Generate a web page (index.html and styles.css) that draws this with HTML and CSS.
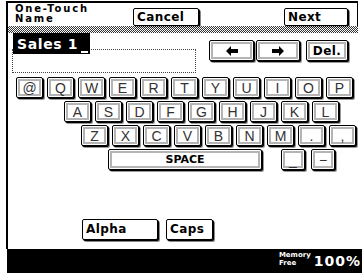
FILE: index.html
```html
<!DOCTYPE html>
<html>
<head>
<meta charset="utf-8">
<title>One-Touch Name</title>
<link rel="stylesheet" href="styles.css">
</head>
<body>
<div class="screen">
  <div class="frame">
    <header class="top">
      <div class="title"><div class="tline">One-Touch</div><div class="tline">Name</div></div>
      <div class="btn cancel">Cancel</div>
      <div class="btn next">Next</div>
    </header>
    <div class="band"></div>
    <div class="entry-row">
      <div class="entry">
        <div class="value">Sales 1<span class="cursor"></span></div>
        <div class="field"></div>
      </div>
      <div class="nav">
        <div class="key navkey left"><svg width="12" height="10" viewBox="0 0 12 10"><polygon points="0,5 5,0 5,3 12,3 12,7 5,7 5,10" fill="#000"/></svg></div>
        <div class="key navkey right"><svg width="12" height="10" viewBox="0 0 12 10"><polygon points="12,5 7,0 7,3 0,3 0,7 7,7 7,10" fill="#000"/></svg></div>
        <div class="key navkey del">Del.</div>
      </div>
    </div>
    <div class="keyboard">
      <div class="krow r1">
        <div class="key">@</div><div class="key">Q</div><div class="key">W</div><div class="key">E</div><div class="key">R</div><div class="key">T</div><div class="key">Y</div><div class="key">U</div><div class="key">I</div><div class="key">O</div><div class="key">P</div>
      </div>
      <div class="krow r2">
        <div class="key">A</div><div class="key">S</div><div class="key">D</div><div class="key">F</div><div class="key">G</div><div class="key">H</div><div class="key">J</div><div class="key">K</div><div class="key">L</div>
      </div>
      <div class="krow r3">
        <div class="key">Z</div><div class="key">X</div><div class="key">C</div><div class="key">V</div><div class="key">B</div><div class="key">N</div><div class="key">M</div><div class="key">.</div><div class="key">,</div>
      </div>
      <div class="krow r4">
        <div class="key space">SPACE</div>
        <div class="key small under">_</div>
        <div class="key small dash">&minus;</div>
      </div>
    </div>
    <div class="modes">
      <div class="btn alpha">Alpha</div>
      <div class="btn caps">Caps</div>
    </div>
  </div>
  <footer class="status">
    <div class="mem"><div class="mline">Memory</div><div class="mline">Free</div></div>
    <div class="pct">100%</div>
  </footer>
</div>
</body>
</html>
```
FILE: styles.css
```css
html, body {
  margin: 0;
  padding: 0;
  background: #fff;
}
body {
  width: 362px;
  height: 273px;
  overflow: hidden;
  font-family: "DejaVu Sans", "Liberation Sans", sans-serif;
  color: #000;
}
.screen {
  width: 362px;
  height: 273px;
  display: flex;
  flex-direction: column;
}
.frame {
  margin: 1px 4px 0 6px;
  height: 248px;
  box-sizing: border-box;
  border-left: 2px solid #000;
  border-top: 2px solid #000;
  display: flex;
  flex-direction: column;
}
.top {
  height: 23px;
  display: flex;
  align-items: flex-start;
  padding-left: 7px;
  border-right: 1px solid #000;
}
.title {
  width: 118px;
  flex: 0 0 118px;
  font-weight: bold;
  font-size: 10px;
  letter-spacing: 1.8px;
  padding-top: 1px;
}
.tline {
  height: 10px;
  line-height: 10px;
}
.btn {
  box-sizing: border-box;
  height: 18px;
  border: 1px solid #000;
  border-radius: 2px;
  background: #fff;
  box-shadow: 1px 1px 0 #000, 2px 2px 0 #8a8a8a;
  font-weight: bold;
  font-size: 12px;
  line-height: 16px;
  padding-left: 3px;
  letter-spacing: 0.4px;
}
.cancel {
  width: 66px;
  margin-top: 5px;
}
.next {
  width: 64px;
  margin-top: 5px;
  margin-left: 85px;
}
.band {
  height: 7px;
  background: repeating-conic-gradient(#000 0 25%, #fff 0 50%) 0 0 / 2px 2px;
  opacity: 0.8;
}
.entry-row {
  height: 40px;
  display: flex;
  align-items: flex-start;
  padding-left: 4px;
}
.entry {
  width: 184px;
  display: flex;
  flex-direction: column;
}
.value {
  position: relative;
  z-index: 1;
  box-sizing: border-box;
  margin-left: 1px;
  width: 77px;
  height: 21px;
  background: #000;
  color: #fff;
  font-weight: bold;
  font-size: 14px;
  letter-spacing: 0.6px;
  padding-left: 4px;
  display: flex;
  align-items: center;
}
.cursor {
  align-self: flex-end;
  width: 7px;
  height: 2px;
  margin-left: 3px;
  margin-bottom: 1px;
  background: #fff;
}
.field {
  box-sizing: border-box;
  height: 24px;
  margin-top: -5px;
  border: 1px dotted #444;
}
.nav {
  display: flex;
  margin-left: 13px;
  margin-top: 7px;
}
.key {
  box-sizing: border-box;
  width: 27px;
  height: 21px;
  flex: 0 0 auto;
  border: 1px solid #000;
  border-radius: 2px;
  background: #fff;
  box-shadow: inset 0 0 0 1px #fff, inset 0 0 0 3px #b4b4b4, inset 0 0 0 4px #fff, 1px 1px 0 #000, 2px 2px 0 #9a9a9a;
  display: flex;
  align-items: center;
  justify-content: center;
  font-family: "Liberation Sans", sans-serif;
  font-size: 14px;
  color: #333;
}
.navkey.left {
  width: 45px;
}
.navkey.right {
  width: 44px;
  margin-left: 2px;
}
.navkey.del {
  width: 42px;
  margin-left: 6px;
  font-family: "DejaVu Sans", sans-serif;
  font-weight: bold;
  font-size: 12px;
  color: #000;
  letter-spacing: 0.4px;
}
.keyboard {
  margin-top: 4px;
  display: flex;
  flex-direction: column;
  gap: 3px;
}
.krow {
  display: flex;
  gap: 4px;
}
.r1 { margin-left: 8px; }
.r2 { margin-left: 56px; }
.r3 { margin-left: 73px; }
.r4 { margin-left: 100px; }
.key.space {
  width: 154px;
  font-family: "DejaVu Sans", sans-serif;
  font-weight: bold;
  font-size: 11px;
  color: #000;
}
.key.small {
  width: 24px;
}
.key.under {
  margin-left: 15px;
}
.key.dash {
  margin-left: 2px;
}
.modes {
  margin-top: 49px;
  display: flex;
}
.alpha {
  width: 76px;
  height: 21px;
  line-height: 19px;
  margin-left: 74px;
}
.caps {
  width: 47px;
  height: 21px;
  line-height: 19px;
  margin-left: 8px;
}
.status {
  margin-left: 7px;
  height: 24px;
  background: #000;
  color: #fff;
  display: flex;
  justify-content: flex-end;
  align-items: flex-end;
  padding-right: 1px;
  padding-bottom: 6px;
  box-sizing: border-box;
}
.mem {
  font-weight: bold;
  font-size: 7px;
  margin-right: 3px;
}
.mline {
  height: 8px;
  line-height: 8px;
}
.pct {
  font-weight: bold;
  font-size: 14px;
  line-height: 12px;
  letter-spacing: 1px;
}
```
